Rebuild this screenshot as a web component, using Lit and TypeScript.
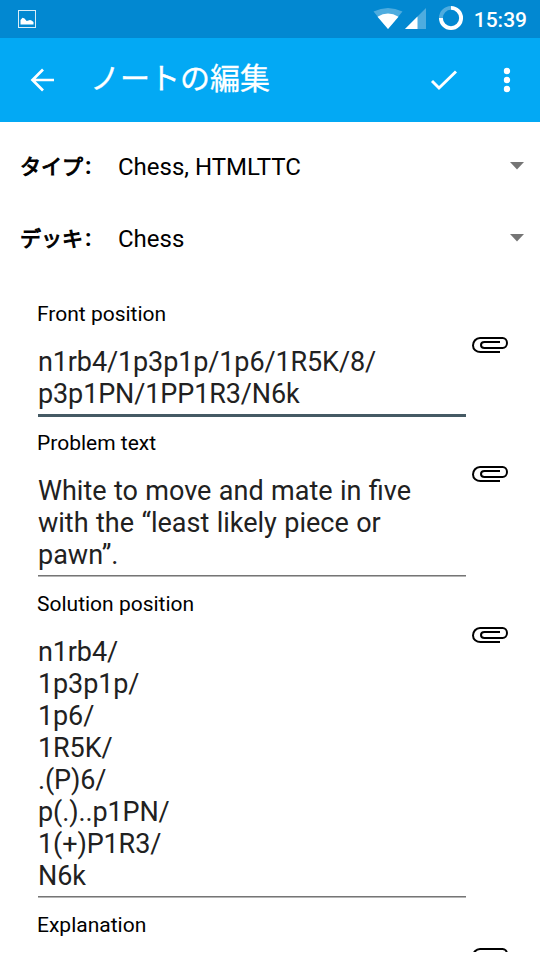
import { LitElement, html, css, svg } from "lit";
import { customElement } from "lit/decorators.js";

const clip = svg`<path d="M28 15H8.500C4.500 15 1 12.500 1 8.500S4 1 8 1H30.500C33 1 35 3.200 35 6S33 11 30.500 11H12.500C10.500 11 9 10 9 8S10.500 5 12.500 5H28"/>`;

@customElement("note-spinner")
class NoteSpinner extends LitElement {
  static properties = { label: {}, value: {} };
  static styles = css`
    :host { display: flex; height: 72px; align-items: center; color: #000; font-size: 24px; line-height: 30px; }
    .label { width: 98px; box-sizing: border-box; padding-left: 20px; white-space: nowrap;
      font: 700 23px/30px Roboto, "Noto Sans CJK JP", sans-serif; }
    .kana { display: inline-block; font: 400 21px/30px "Noto Sans CJK JP", sans-serif; -webkit-text-stroke: 1px #000; margin-right: 2px; }
    .value { flex: 1; padding: 2px 0 0 20px; }
    .arrow { width: 14px; height: 8px; margin-right: 16px; fill: #757575; display: block; }
  `;
  label!: string;
  value!: string;
  render() {
    return html`<div class="label"><span class="kana">${this.label}</span>:</div>
      <div class="value">${this.value}</div>
      <svg class="arrow" viewBox="0 0 14 8"><path d="M0 0H14L7 7.500Z"/></svg>`;
  }
}

@customElement("note-field")
class NoteField extends LitElement {
  static properties = { label: {}, lines: { attribute: false }, active: { type: Boolean } };
  static styles = css`
    :host { display: grid; grid-template-columns: 429px 42px; }
    .label { padding-top: 1px; font-size: 21px; line-height: 25px; color: #000; }
    .text { margin: 19px 0 0 1px; padding-bottom: 4px; font-size: 27px; line-height: 32px; letter-spacing: -.12px; color: #212121; white-space: pre; }
    .prose { letter-spacing: normal; word-spacing: .7px; }
    .rule { margin: 0 0 0 1px; height: 16px; }
    .rule::before { content: ""; display: block; height: 1px; background: #757575; border-bottom: 1px solid #b5b5b5; }
    .rule.active::before { height: 3px; background: #455a64; border: 0; }
    .clip { width: 36px; height: 16px; margin: 36px 0 0 6px; fill: none; stroke: #000; stroke-width: 2; display: block; }
  `;
  label!: string;
  lines!: string[];
  active!: boolean;
  render() {
    const prose = this.lines.some((line) => line.includes(" "));
    return html`<div>
        <div class="label">${this.label}</div>
        <div class="text ${prose ? "prose" : ""}">${this.lines.join("\n")}</div>
        <div class="rule ${this.active ? "active" : ""}"></div>
      </div>
      <svg class="clip" viewBox="0 0 36 16">${clip}</svg>`;
  }
}

@customElement("app-root")
class AppRoot extends LitElement {
  static styles = css`
    :host { display: flex; flex-direction: column; width: 540px; height: 960px; overflow: hidden; background: #fff;
      font-family: Roboto, "Noto Sans CJK JP", sans-serif; }
    svg { display: block; flex: none; }
    .status { height: 38px; flex: none; background: #0288d1; display: flex; align-items: center; color: #fff; }
    .picture { margin-left: 17px; margin-right: auto; }
    .clock { font-size: 21px; font-weight: 500; line-height: 38px; margin: 1px 13px 0 9px; }
    .bar { height: 84px; flex: none; background: #03a9f4; display: flex; align-items: center; color: #fff; }
    .title { flex: 1; margin: 0 0 8px 36px; font: 400 30px/44px "Noto Sans CJK JP", sans-serif; -webkit-text-stroke: .3px #fff; }
    .back { margin-left: 30px; }
    .more { margin: 0 29px 0 45px; }
    .content { height: 830px; overflow: hidden; }
    .spinners { padding-top: 8px; }
    .fields { padding: 27px 0 0 37px; }
  `;
  render() {
    return html`
      <div class="status">
        <svg class="picture" width="20" height="20" viewBox="0 0 20 20"><rect x="1.500" y="1.500" width="17" height="17" fill="none" stroke="#fff" stroke-opacity=".85"/><path d="M3.500 15.500V11l2-2.200 2 .6 2.200 2.600L13 11l1.500.5 2 1.500v2.500Z" fill="#fff"/></svg>
        <svg width="92" height="30" viewBox="373 4 92 30" fill="#fff">
          <path d="M373.500 11.500Q388 4.500 402.500 11.500L388 29Z" fill-opacity=".3"/>
          <path d="M377.500 16.800Q388 10 398.500 16.800L388 29Z"/>
          <path d="M426 8V29H405Z" fill-opacity=".3"/>
          <path d="M417.500 16.500V29H405Z"/>
          <path d="M440.900 18A10.100 10.100 0 0 1 451 7.900" fill="none" stroke="#fff" stroke-opacity=".3" stroke-width="3.900"/>
          <path d="M451 7.900A10.100 10.100 0 1 1 440.900 18" fill="none" stroke="#fff" stroke-width="3.900"/>
        </svg>
        <div class="clock">15:39</div>
      </div>
      <div class="bar">
        <svg class="back" width="24" height="24" viewBox="0 0 24 24" fill="none" stroke="#fff" stroke-width="2.700"><path d="M24 12H2.500M13 1.500L2.500 12L13 22.500"/></svg>
        <div class="title">ノートの編集</div>
        <svg width="28" height="24" viewBox="0 0 28 24" fill="none" stroke="#fff" stroke-width="2.900"><path d="M2 13L9 20L26 3.500"/></svg>
        <svg class="more" width="8" height="26" viewBox="0 0 8 26" fill="#fff"><circle cx="4" cy="4" r="3.200"/><circle cx="4" cy="13" r="3.200"/><circle cx="4" cy="22" r="3.200"/></svg>
      </div>
      <div class="content">
        <div class="spinners">
          <note-spinner label="タイプ" value="Chess, HTMLTTC"></note-spinner>
          <note-spinner label="デッキ" value="Chess"></note-spinner>
        </div>
        <div class="fields">
          <note-field label="Front position" active .lines=${["n1rb4/1p3p1p/1p6/1R5K/8/", "p3p1PN/1PP1R3/N6k"]}></note-field>
          <note-field label="Problem text" .lines=${["White to move and mate in five", "with the “least likely piece or", "pawn”."]}></note-field>
          <note-field label="Solution position" .lines=${["n1rb4/", "1p3p1p/", "1p6/", "1R5K/", ".(P)6/", "p(.)..p1PN/", "1(+)P1R3/", "N6k"]}></note-field>
          <note-field label="Explanation" .lines=${[""]}></note-field>
        </div>
      </div>`;
  }
}
